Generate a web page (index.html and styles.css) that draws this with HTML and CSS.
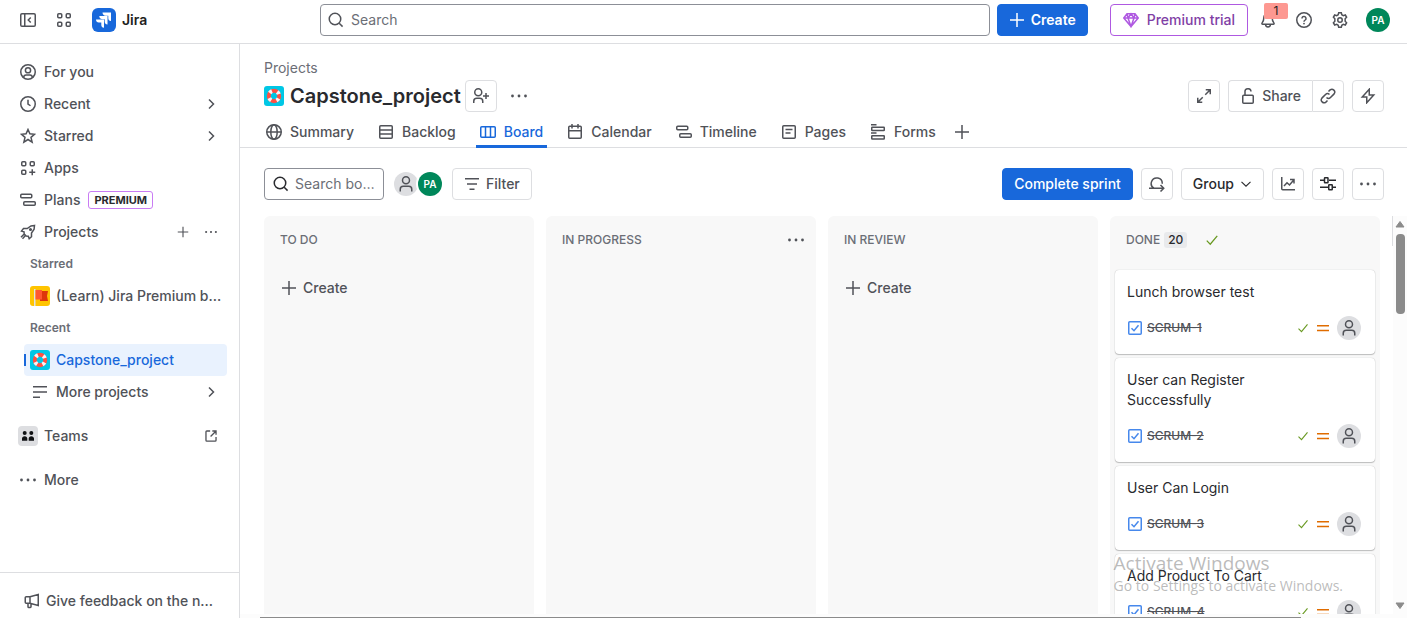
FILE: index.html
```html
<!DOCTYPE html>
<html lang="en">
<head>
<meta charset="utf-8">
<title>Capstone_project - Board - Jira</title>
<link rel="stylesheet" href="styles.css">
</head>
<body>
<svg class="sprite" aria-hidden="true">
  <symbol id="i-collapse" viewBox="0 0 16 16"><rect x=".75" y="1.75" width="14.5" height="12.5" rx="1.25"/><path d="M4.75 2v12M10.75 5.5 8.25 8l2.5 2.5"/></symbol>
  <symbol id="i-switcher" viewBox="0 0 16 16"><rect x="1.75" y="1.75" width="4" height="4" rx="1"/><rect x="10.25" y="1.75" width="4" height="4" rx="1"/><rect x="1.75" y="10.25" width="4" height="4" rx="1"/><rect x="10.25" y="10.25" width="4" height="4" rx="1"/></symbol>
  <symbol id="i-search" viewBox="0 0 16 16"><circle cx="7" cy="7" r="5.75"/><path d="m11.2 11.2 3.4 3.4"/></symbol>
  <symbol id="i-plus" viewBox="0 0 16 16"><path d="M8 1v14M1 8h14"/></symbol>
  <symbol id="i-gem" viewBox="0 0 16 16"><path d="M4 1.75h8L15.2 6 8 14.5.8 6zM.8 6h14.4M4 1.75 5 6l3 8.5L11 6l1-4.25M5 6l3-4.25L11 6"/></symbol>
  <symbol id="i-bell" viewBox="0 0 16 16"><path d="M8 1.5a4.2 4.2 0 0 0-4.2 4.2c0 2.6-.6 3.7-1.5 4.9-.7.9-.4 1.65.4 1.65h10.6c.8 0 1.1-.75.4-1.65-.9-1.2-1.5-2.3-1.5-4.9A4.2 4.2 0 0 0 8 1.500zM5.600 12.500a2.400 2.400 0 0 0 4.800 0"/></symbol>
  <symbol id="i-help" viewBox="0 0 16 16"><circle cx="8" cy="8" r="7.25"/><path d="M6 6.400a2 2 0 1 1 3.200 1.600c-.8.55-1.200.9-1.200 1.700"/><circle class="dot" cx="8" cy="11.600" r=".9"/></symbol>
  <symbol id="i-gear" viewBox="0 0 16 16"><path d="M6.700.75h2.600l.5 2 1.500.85 2-.6 1.300 2.250-1.450 1.500v2.500l1.450 1.500-1.300 2.250-2-.6-1.500.85-.5 2H6.700l-.5-2-1.500-.85-2 .6-1.300-2.250 1.450-1.500v-2.500L1.400 5.250 2.700 3l2 .6 1.500-.85z"/><circle cx="8" cy="8" r="2.250"/></symbol>
  <symbol id="i-user-circle" viewBox="0 0 16 16"><circle cx="8" cy="8" r="7.25"/><circle cx="8" cy="6.250" r="2.600"/><path d="M3.600 13.500c.2-1.800 1-2.500 2.400-2.500h4c1.400 0 2.200.7 2.400 2.500"/></symbol>
  <symbol id="i-clock" viewBox="0 0 16 16"><circle cx="8" cy="8" r="7.25"/><path d="M8 3.750V8l2.500 1.750"/></symbol>
  <symbol id="i-star" viewBox="0 0 16 16"><path d="m8 1.500 1.900 4.350 4.600.4-3.500 3.100 1.100 4.700L8 11.500l-4.100 2.550L5 9.350l-3.500-3.100 4.600-.4z"/></symbol>
  <symbol id="i-apps" viewBox="0 0 16 16"><rect x="1.750" y="1.750" width="4" height="4" rx="1"/><rect x="10.250" y="1.750" width="4" height="4" rx="1"/><rect x="1.750" y="10.250" width="4" height="4" rx="1"/><path d="M12.250 9.250v6M9.250 12.250h6"/></symbol>
  <symbol id="i-timeline" viewBox="0 0 16 16"><rect x=".75" y="2.250" width="11" height="3.500" rx="1"/><rect x="3.750" y="9.750" width="11.500" height="3.500" rx="1"/></symbol>
  <symbol id="i-rocket" viewBox="0 0 16 16"><path d="M14.500 1.400 11 1.900 7.200 4.500H3.500L1.500 7l2.500.8.2 2.200 2 2 2.100.2.900 2.500 2.300-2V9l2.600-3.800zM4.200 10 1 13.200M5.200 11.800 2.500 14.700"/><circle cx="10.500" cy="5.500" r=".8"/></symbol>
  <symbol id="i-chevron" viewBox="0 0 16 16"><path d="m6 3.500 4.500 4.500L6 12.500"/></symbol>
  <symbol id="i-down" viewBox="0 0 16 16"><path d="M2 5.250 8 11l6-5.750"/></symbol>
  <symbol id="i-dots" viewBox="0 0 16 16"><circle class="dot" cx="1.500" cy="8" r="1.400"/><circle class="dot" cx="8" cy="8" r="1.400"/><circle class="dot" cx="14.500" cy="8" r="1.400"/></symbol>
  <symbol id="i-lines" viewBox="0 0 16 16"><path d="M1 2.750h14M1 8h14M1 13.250h7"/></symbol>
  <symbol id="i-external" viewBox="0 0 16 16"><path d="M7 2.250H3.250a1 1 0 0 0-1 1v9.500a1 1 0 0 0 1 1h9.500a1 1 0 0 0 1-1V9M9.500 2.250h4.250V6.500M13.500 2.500 7.500 8.500"/></symbol>
  <symbol id="i-megaphone" viewBox="0 0 16 16"><path d="M6 3.750 14.250 1.500v11L6 10.250H2.250a1 1 0 0 1-1-1v-4.500a1 1 0 0 1 1-1zM6 3.750v6.500M4 10.500v3.250a.75.75 0 0 0 .75.75h1.500a.75.75 0 0 0 .75-.75V10.600"/></symbol>
  <symbol id="i-team" viewBox="0 0 20 20"><rect width="20" height="20" rx="4" fill="#dddee1"/><g fill="#101214"><circle cx="6.700" cy="7" r="2"/><circle cx="13.300" cy="7" r="2"/><path d="M4 14.800v-2.300c0-1.300 1-2.300 2.700-2.300s2.600 1 2.600 2.300v2.300zM10.700 14.800v-2.300c0-1.300 1-2.300 2.600-2.300s2.700 1 2.700 2.300v2.300z"/></g></symbol>
  <symbol id="i-flag" viewBox="0 0 20 20"><rect width="20" height="20" rx="3" fill="#ffc400"/><path d="M4 3h1.500v17H4z" fill="#dfe1e6"/><path d="M10 5h8l-1 5 1 5h-8z" fill="#de350b"/><path d="M5.500 4H12v9.500H5.500z" fill="#ff5630"/></symbol>
  <symbol id="i-buoy" viewBox="0 0 20 20"><rect width="20" height="20" rx="3" fill="#00c7e5"/><circle cx="10" cy="10" r="5.200" fill="none" stroke="#ff5043" stroke-width="4"/><circle cx="10" cy="10" r="5.200" fill="none" stroke="#f4f5f7" stroke-width="4" stroke-dasharray="2.700 5.468" stroke-dashoffset="-2.734"/></symbol>
  <symbol id="i-logo" viewBox="0 0 24 24"><rect width="24" height="24" rx="6" fill="#1868db"/><g fill="#fff"><path d="M10.500 4.500H19V13c-1.700 0-2.700-1.200-2.700-2.700V7.700h-2.700c-1.800 0-3.100-1.200-3.100-3.200z"/><path d="M7.300 8.100h8.200v8.300c-1.700 0-2.800-1.200-2.800-2.700v-2.500h-2.500c-1.800 0-2.900-1.300-2.900-3.100z"/><path d="M4 11.600h8v8.100c-1.700 0-2.700-1.200-2.700-2.700v-2.400H6.800c-1.700 0-2.800-1.200-2.800-3z"/></g></symbol>
  <symbol id="i-person" viewBox="0 0 16 16"><circle cx="8" cy="4.250" r="3.500"/><path d="M2.250 15.500v-2.250a3 3 0 0 1 3-3h5.500a3 3 0 0 1 3 3v2.250"/></symbol>
  <symbol id="i-person-add" viewBox="0 0 16 16"><circle cx="5.250" cy="4.250" r="3.500"/><path d="M.75 15v-1.750a3 3 0 0 1 3-3h3a3 3 0 0 1 3 3V15M13 5v6M10 8h6"/></symbol>
  <symbol id="i-globe" viewBox="0 0 16 16"><circle cx="8" cy="8" r="7.250"/><ellipse cx="8" cy="8" rx="3.200" ry="7.250"/><path d="M.75 8h14.500"/></symbol>
  <symbol id="i-backlog" viewBox="0 0 16 16"><rect x="1.750" y="1.750" width="12.500" height="12.500" rx="1"/><path d="M2 6h12M2 10h12"/></symbol>
  <symbol id="i-board" viewBox="0 0 16 16"><rect x=".75" y="2.750" width="14.500" height="10.500" rx="1"/><path d="M5.500 3v10M10.500 3v10"/></symbol>
  <symbol id="i-calendar" viewBox="0 0 16 16"><rect x="1.750" y="2.250" width="12.500" height="12" rx="1"/><path d="M2 6.750h12M5 0v4.500M11 0v4.500"/></symbol>
  <symbol id="i-page" viewBox="0 0 16 16"><rect x="1.750" y="1.750" width="12.500" height="12.500" rx="1"/><path d="M4.500 5.500h7M4.500 9h5"/></symbol>
  <symbol id="i-form" viewBox="0 0 16 16"><path d="M1 .75h5.500M1 9h5.500"/><rect x="1.750" y="3.250" width="12.500" height="3.250" rx=".5"/><rect x="1.750" y="11.750" width="12.500" height="3.250" rx=".5"/></symbol>
  <symbol id="i-filter" viewBox="0 0 16 16"><path d="M1 2.750h14M3 8h10M5.500 13.250h5"/></symbol>
  <symbol id="i-expand" viewBox="0 0 16 16"><path d="M9.750 1.750h4.500v4.500M14 2 9.250 6.750M6.250 14.250h-4.500v-4.500M2 14l4.750-4.750"/></symbol>
  <symbol id="i-lock" viewBox="0 0 16 16"><rect x="2.750" y="7.250" width="10.500" height="8" rx="1"/><path d="M5 7V4a3 3 0 0 1 6-.5"/></symbol>
  <symbol id="i-link" viewBox="0 0 16 16"><path d="m8.500 3.500 1.600-1.600a2.850 2.850 0 0 1 4 4l-3.600 3.600a2.850 2.850 0 0 1-4 0M7.500 12.500l-1.600 1.600a2.850 2.850 0 0 1-4-4l3.600-3.600a2.850 2.850 0 0 1 4 0"/></symbol>
  <symbol id="i-bolt" viewBox="0 0 16 16"><path d="M9.250 1.250 2.250 9h4.500v5.750L13.750 7h-4.500z"/></symbol>
  <symbol id="i-sprint" viewBox="0 0 16 16"><path d="M-.5 12.250H14.500M11.500 9l3.250 3.250-3.250 3.250M5 12.250a5.500 5.500 0 1 1 8.250-4.500"/></symbol>
  <symbol id="i-chart" viewBox="0 0 16 16"><path d="M1.750 1v11.750a1 1 0 0 0 1 1H15M4 10l3-3.250 2.500 2.250 4.250-5M10 3.500h4v4"/></symbol>
  <symbol id="i-sliders" viewBox="0 0 16 16"><path d="M0 4.250h4M9 4.250h7M0 11.250h8M13 11.250h3"/><rect x="4.500" y="1.750" width="3.500" height="5" rx=".5"/><rect x="8.750" y="8.750" width="3.500" height="5" rx=".5"/></symbol>
  <symbol id="i-check" viewBox="0 0 16 16"><path d="m2 8.750 4 4L14 3.250"/></symbol>
  <symbol id="i-task" viewBox="0 0 16 16"><rect x="1.750" y="1.750" width="12.500" height="12.500" rx="1"/><path d="m4.500 8.250 2.500 2.500 4.500-5.500"/></symbol>
  <symbol id="i-medium" viewBox="0 0 16 16"><path d="M2 5.750h12M2 10.500h12"/></symbol>
  <symbol id="i-arrow" viewBox="0 0 10 8"><path d="M5 1.500 9 7H1z" fill="currentColor" stroke="currentColor" stroke-linejoin="round"/></symbol>
</svg>

<header class="topbar">
  <div class="brand">
    <button class="bare" aria-label="Collapse sidebar"><svg class="icon"><use href="#i-collapse"/></svg></button>
    <button class="bare" aria-label="Switch apps"><svg class="icon"><use href="#i-switcher"/></svg></button>
    <a class="logo" href="#"><svg class="logo-mark"><use href="#i-logo"/></svg>Jira</a>
  </div>
  <label class="search"><svg class="icon"><use href="#i-search"/></svg><input type="text" placeholder="Search" aria-label="Search"></label>
  <button class="btn primary create"><svg class="icon"><use href="#i-plus"/></svg>Create</button>
  <button class="btn premium"><svg class="icon"><use href="#i-gem"/></svg>Premium trial</button>
  <div class="actions">
    <button class="bare bell" aria-label="Notifications"><svg class="icon"><use href="#i-bell"/></svg><span class="badge">1</span></button>
    <button class="bare" aria-label="Help"><svg class="icon"><use href="#i-help"/></svg></button>
    <button class="bare" aria-label="Settings"><svg class="icon"><use href="#i-gear"/></svg></button>
    <button class="avatar green" aria-label="Profile">PA</button>
  </div>
</header>

<div class="layout">
  <aside class="sidebar">
    <nav class="nav">
      <a class="row" href="#"><svg class="icon"><use href="#i-user-circle"/></svg><span class="label">For you</span></a>
      <a class="row" href="#"><svg class="icon"><use href="#i-clock"/></svg><span class="label">Recent</span><svg class="icon"><use href="#i-chevron"/></svg></a>
      <a class="row" href="#"><svg class="icon"><use href="#i-star"/></svg><span class="label">Starred</span><svg class="icon"><use href="#i-chevron"/></svg></a>
      <a class="row" href="#"><svg class="icon"><use href="#i-apps"/></svg><span class="label">Apps</span></a>
      <a class="row" href="#"><svg class="icon"><use href="#i-timeline"/></svg>Plans<span class="lozenge">PREMIUM</span></a>
      <div class="row"><svg class="icon"><use href="#i-rocket"/></svg><a class="label" href="#">Projects</a>
        <span class="row-tools"><button class="bare" aria-label="Create project"><svg class="icon small"><use href="#i-plus"/></svg></button><button class="bare" aria-label="More actions"><svg class="icon small"><use href="#i-dots"/></svg></button></span></div>
      <div class="sub">
        <h2 class="group">Starred</h2>
        <a class="row" href="#"><svg class="tile"><use href="#i-flag"/></svg><span class="label">(Learn) Jira Premium benefits</span></a>
        <h2 class="group">Recent</h2>
        <a class="row selected" href="#" aria-current="page"><svg class="tile"><use href="#i-buoy"/></svg><span class="label">Capstone_project</span></a>
        <a class="row more" href="#"><svg class="icon"><use href="#i-lines"/></svg><span class="label">More projects</span><svg class="icon"><use href="#i-chevron"/></svg></a>
      </div>
      <a class="row spaced teams" href="#"><svg class="tile"><use href="#i-team"/></svg><span class="label">Teams</span><svg class="icon external"><use href="#i-external"/></svg></a>
      <a class="row spaced" href="#"><svg class="icon"><use href="#i-dots"/></svg><span class="label">More</span></a>
    </nav>
    <div class="feedback"><a class="row" href="#"><svg class="icon"><use href="#i-megaphone"/></svg><span class="label">Give feedback on the new navigation</span></a></div>
  </aside>

  <main class="main">
    <div class="project">
      <a class="crumb" href="#">Projects</a>
      <div class="title-row">
        <svg class="tile"><use href="#i-buoy"/></svg>
        <h1>Capstone_project</h1>
        <button class="btn square add-people" aria-label="Add people"><svg class="icon"><use href="#i-person-add"/></svg></button>
        <button class="bare dots-btn" aria-label="More actions"><svg class="icon"><use href="#i-dots"/></svg></button>
        <div class="title-tools">
          <button class="btn square" aria-label="Full screen"><svg class="icon"><use href="#i-expand"/></svg></button>
          <div class="split">
            <button class="btn"><svg class="icon"><use href="#i-lock"/></svg>Share</button>
            <button class="btn square" aria-label="Copy link"><svg class="icon"><use href="#i-link"/></svg></button>
          </div>
          <button class="btn square" aria-label="Automation"><svg class="icon"><use href="#i-bolt"/></svg></button>
        </div>
      </div>
    </div>
    <nav class="tabs">
      <a class="tab" href="#"><svg class="icon"><use href="#i-globe"/></svg>Summary</a>
      <a class="tab" href="#"><svg class="icon"><use href="#i-backlog"/></svg>Backlog</a>
      <a class="tab active" href="#"><svg class="icon"><use href="#i-board"/></svg>Board</a>
      <a class="tab" href="#"><svg class="icon"><use href="#i-calendar"/></svg>Calendar</a>
      <a class="tab" href="#"><svg class="icon"><use href="#i-timeline"/></svg>Timeline</a>
      <a class="tab" href="#"><svg class="icon"><use href="#i-page"/></svg>Pages</a>
      <a class="tab" href="#"><svg class="icon"><use href="#i-form"/></svg>Forms</a>
      <button class="tab add-view" aria-label="Add view"><svg class="icon"><use href="#i-plus"/></svg></button>
    </nav>
    <div class="toolbar">
      <label class="search board-search"><svg class="icon"><use href="#i-search"/></svg><input type="text" placeholder="Search board" aria-label="Search board"></label>
      <div class="people">
        <button class="avatar" aria-label="Unassigned"><svg class="icon"><use href="#i-person"/></svg></button>
        <button class="avatar green" aria-label="PA">PA</button>
      </div>
      <button class="btn filter"><svg class="icon"><use href="#i-filter"/></svg>Filter</button>
      <div class="toolbar-end">
        <button class="btn primary">Complete sprint</button>
        <button class="btn square" aria-label="Sprint details"><svg class="icon"><use href="#i-sprint"/></svg></button>
        <button class="btn dark">Group<svg class="icon small"><use href="#i-down"/></svg></button>
        <button class="btn square" aria-label="Insights"><svg class="icon"><use href="#i-chart"/></svg></button>
        <button class="btn square dark" aria-label="View settings"><svg class="icon"><use href="#i-sliders"/></svg></button>
        <button class="btn square" aria-label="More"><svg class="icon"><use href="#i-dots"/></svg></button>
      </div>
    </div>
    <div class="board">
      <div class="columns">
        <section class="column">
          <header class="column-head"><h2>TO DO</h2></header>
          <button class="bare add"><svg class="icon"><use href="#i-plus"/></svg>Create</button>
        </section>
        <section class="column">
          <header class="column-head"><h2>IN PROGRESS</h2><button class="bare column-menu" aria-label="Column actions"><svg class="icon"><use href="#i-dots"/></svg></button></header>
        </section>
        <section class="column">
          <header class="column-head"><h2>IN REVIEW</h2></header>
          <button class="bare add"><svg class="icon"><use href="#i-plus"/></svg>Create</button>
        </section>
        <section class="column">
          <header class="column-head"><h2>DONE</h2><span class="count">20</span><svg class="icon done"><use href="#i-check"/></svg></header>
          <article class="card"><h3>Lunch browser test</h3>
            <div class="meta"><svg class="icon task"><use href="#i-task"/></svg><a class="key" href="#">SCRUM-1</a><svg class="icon tick"><use href="#i-check"/></svg><svg class="icon medium"><use href="#i-medium"/></svg><span class="avatar"><svg class="icon"><use href="#i-person"/></svg></span></div></article>
          <article class="card"><h3>User can Register Successfully</h3>
            <div class="meta"><svg class="icon task"><use href="#i-task"/></svg><a class="key" href="#">SCRUM-2</a><svg class="icon tick"><use href="#i-check"/></svg><svg class="icon medium"><use href="#i-medium"/></svg><span class="avatar"><svg class="icon"><use href="#i-person"/></svg></span></div></article>
          <article class="card"><h3>User Can Login</h3>
            <div class="meta"><svg class="icon task"><use href="#i-task"/></svg><a class="key" href="#">SCRUM-3</a><svg class="icon tick"><use href="#i-check"/></svg><svg class="icon medium"><use href="#i-medium"/></svg><span class="avatar"><svg class="icon"><use href="#i-person"/></svg></span></div></article>
          <article class="card"><h3>Add Product To Cart</h3>
            <div class="meta"><svg class="icon task"><use href="#i-task"/></svg><a class="key" href="#">SCRUM-4</a><svg class="icon tick"><use href="#i-check"/></svg><svg class="icon medium"><use href="#i-medium"/></svg><span class="avatar"><svg class="icon"><use href="#i-person"/></svg></span></div></article>
        </section>
      </div>
      <div class="next-edge"></div>
      <div class="vscroll"><svg class="arrow"><use href="#i-arrow"/></svg><div class="vthumb"></div><svg class="arrow down"><use href="#i-arrow"/></svg></div>
    </div>
    <div class="hscroll"><div class="hthumb"></div></div>
  </main>
</div>
<div class="watermark"><p class="wm-title">Activate Windows</p><p class="wm-text">Go to Settings to activate Windows.</p></div>
</body>
</html>
```
FILE: styles.css
```css
* { box-sizing: border-box; }
body {
  margin: 0;
  height: 100vh;
  display: flex;
  flex-direction: column;
  overflow: hidden;
  background: #fff;
  color: #505258;
  font: 500 14px/20px Inter, "Liberation Sans", sans-serif;
}
h1, h2, h3, p { margin: 0; }
a { color: inherit; text-decoration: none; }
button, input { font: inherit; color: inherit; }
.sprite { position: absolute; width: 0; height: 0; }
.icon {
  width: 16px;
  height: 16px;
  flex: none;
  fill: none;
  stroke: currentColor;
  stroke-width: 1.5;
  overflow: visible;
}
.icon.small { width: 12px; height: 12px; }
.dot { fill: currentColor; stroke: none; }
.tile { width: 20px; height: 20px; flex: none; }
.bare {
  display: flex;
  align-items: center;
  padding: 0;
  border: 0;
  background: none;
}

/* Buttons */
.btn {
  display: flex;
  align-items: center;
  justify-content: center;
  gap: 6px;
  height: 32px;
  padding: 0 11px;
  border: 1px solid #dddee1;
  border-radius: 4px;
  background: #fff;
  white-space: nowrap;
}
.btn.square { width: 32px; padding: 0; }
.btn.dark { color: #292a2e; }
.btn.primary { border-color: #1868db; background: #1868db; color: #fff; }
.avatar {
  display: flex;
  align-items: center;
  justify-content: center;
  flex: none;
  width: 24px;
  height: 24px;
  padding: 0;
  border: 0;
  border-radius: 50%;
  background: #dddee1;
}
.avatar.green { background: #00875a; color: #fff; font-size: 10px; font-weight: 600; }

/* Search fields */
.search {
  display: flex;
  align-items: center;
  gap: 7px;
  height: 32px;
  padding: 0 8px 0 7px;
  border: 1px solid #8c8f97;
  border-radius: 4px;
}
.search input {
  flex: 1;
  min-width: 0;
  padding: 0;
  border: 0;
  outline: 0;
  background: none;
  font-weight: 400;
  text-overflow: ellipsis;
}
.search input::placeholder { color: #6b6e76; opacity: 1; }

/* Top bar */
.topbar {
  display: flex;
  align-items: center;
  flex: none;
  height: 44px;
  padding: 0 17px 4px 20px;
  border-bottom: 1px solid #dddee1;
}
.brand { display: flex; align-items: center; gap: 20px; flex: 0 0 300px; }
.logo { display: flex; align-items: center; gap: 6px; color: #1e1f21; font-weight: 600; }
.logo-mark { width: 24px; height: 24px; }
.topbar .search { flex: 1; }
.create { margin-left: 7px; font-weight: 600; }
.btn.premium { gap: 8px; margin-left: 22px; padding: 0 12px; border-color: #af59e1; color: #803fa5; }
.premium .icon { color: #af59e1; }
.actions { display: flex; align-items: center; gap: 20px; margin-left: 12px; }
.actions .avatar { margin-left: -2px; }
.bell { position: relative; }
.badge {
  position: absolute;
  left: 4px;
  top: -9px;
  width: 24px;
  height: 16px;
  border-radius: 2px;
  background: #fd9891;
  color: #1e1f21;
  font: 400 12px/16px Inter, sans-serif;
}

/* Sidebar */
.layout { display: flex; flex: 1; min-height: 0; }
.sidebar {
  display: flex;
  flex-direction: column;
  flex: none;
  width: 240px;
  border-right: 1px solid #dddee1;
}
.nav { flex: 1; padding: 12px 12px 0; }
.row { display: flex; align-items: center; gap: 8px; height: 32px; padding: 0 8px; border-radius: 4px; }
.label { flex: 1; min-width: 0; overflow: hidden; white-space: nowrap; text-overflow: ellipsis; }
.lozenge {
  padding: 0 5px;
  border: 1px solid #c97cf4;
  border-radius: 3px;
  color: #292a2e;
  font-size: 11px;
  line-height: 16px;
  font-weight: 700;
}
.row-tools { display: flex; gap: 16px; padding-right: 2px; }
.sub { margin-left: 12px; }
.group { padding-left: 6px; color: #6b6e76; font-size: 12px; line-height: 32px; font-weight: 600; }
.sub .row, .teams { gap: 6px; padding-left: 6px; }
.sub .row:not(.selected):not(.more) { padding-right: 4px; }
.sub .more { gap: 8px; padding-left: 8px; }
.selected { background: #e9f2fe; color: #1868db; }
.sub .selected { padding-left: 0; }
.selected::before {
  content: "";
  width: 2px;
  height: 12px;
  margin-right: -2px;
  background: #1868db;
}
.spaced { margin-top: 12px; }
.external { width: 14px; height: 14px; margin-right: 1px; }
.feedback { padding: 12px 20px 1px 16px; border-top: 1px solid #dddee1; }
.feedback .row { gap: 6px; padding-right: 4px; }

/* Project header */
.main { display: flex; flex-direction: column; flex: 1; min-width: 0; }
.project { padding: 14px 23px 0 24px; }
.crumb { display: block; width: max-content; color: #6b6e76; font-weight: 400; }
.title-row { display: flex; align-items: center; gap: 6px; margin-top: 2px; }
h1 { color: #292a2e; font-size: 20px; line-height: 24px; font-weight: 600; }
.add-people { margin-left: -2px; }
.dots-btn { margin-left: 8px; }
.title-tools { display: flex; gap: 8px; margin-left: auto; }
.split { display: flex; }
.split .btn:first-child { border-radius: 4px 0 0 4px; border-right: 0; }
.split .btn:last-child { border-radius: 0 4px 4px 0; }
.tabs { display: flex; gap: 16px; padding: 4px 22px 0; border-bottom: 1px solid #dddee1; }
.tab {
  display: flex;
  align-items: center;
  gap: 8px;
  height: 32px;
  margin-bottom: -1px;
  padding: 2px 4px 0;
  border: 0;
  border-bottom: 3px solid transparent;
  background: none;
}
.tab.add-view { margin-left: -2px; padding: 2px 0 0; }
.tab.active { border-bottom-color: #1868db; color: #1868db; }

/* Board toolbar */
.toolbar { display: flex; align-items: center; padding: 20px 23px 16px 24px; }
.board-search { width: 120px; padding-left: 8px; padding-right: 6px; gap: 6px; }
.board-search .icon { color: #292a2e; }
.people { display: flex; margin: 0 10px; }
.people .green { box-shadow: 0 0 0 2px #fff; }
.filter { gap: 6px; }
.toolbar-end { display: flex; gap: 8px; margin-left: auto; }

/* Board */
.board { display: flex; flex: 1; min-height: 0; padding-left: 24px; }
.columns { display: flex; flex: 1; gap: 12px; min-height: 0; }
.column {
  flex: 1 1 0;
  min-width: 0;
  padding: 0 5px;
  overflow: hidden;
  border-radius: 6px 6px 0 0;
  background: #f8f8f8;
}
.column-head { display: flex; align-items: center; height: 48px; margin-bottom: 6px; padding: 0 7px 0 11px; }
.column-head h2 { color: #6b6e76; font-size: 12px; line-height: 16px; font-weight: 500; }
.column-menu { margin-left: auto; }
.count {
  margin-left: 4px;
  padding: 0 4px;
  border-radius: 3px;
  background: #e9eaec;
  color: #292a2e;
  font-size: 12px;
  line-height: 16px;
}
.done { width: 14px; height: 14px; margin-left: 18px; color: #6a9a23; }
.add { gap: 6px; height: 36px; padding-left: 12px; }
.card {
  margin-bottom: 4px;
  padding: 12px 14px 14px 12px;
  border-radius: 4px;
  background: #fff;
  box-shadow: 0 1px 1px rgba(30, 31, 33, .25), 0 0 1px rgba(30, 31, 33, .31);
}
.card h3 { width: 160px; color: #292a2e; font-size: 14px; line-height: 20px; font-weight: 400; }
.meta { display: flex; align-items: center; margin-top: 14px; }
.task { color: #4688ec; }
.key { margin: 0 auto 0 4px; font-size: 12px; line-height: 16px; text-decoration: line-through; }
.tick { width: 12px; height: 12px; color: #6a9a23; }
.medium { margin: 0 6px; color: #e06c00; }

/* Scrollbars */
.next-edge { width: 1px; height: 30px; margin-left: 12px; background: #dddee1; }
.vscroll { display: flex; flex-direction: column; align-items: center; gap: 6px; width: 14px; padding: 4px 0; background: #fcfcfc; }
.arrow { width: 10px; height: 8px; flex: none; color: #8b8b8b; }
.down { margin-top: auto; transform: rotate(180deg); }
.vthumb { width: 9px; height: 80px; border-radius: 4px; background: #8b8b8b; }
.hscroll { flex: none; height: 4px; padding: 3px 106px 0 20px; background: #fcfcfc; }
.hthumb { height: 1px; background: #8b8b8b; }

/* System overlay */
.watermark {
  position: absolute;
  right: 64px;
  bottom: 22px;
  color: rgba(120, 120, 120, .5);
  font-family: "Open Sans", sans-serif;
  font-weight: 400;
  white-space: nowrap;
  pointer-events: none;
}
.wm-title { font-size: 19px; line-height: 26px; }
.wm-text { font-size: 14px; line-height: 20px; }
```
